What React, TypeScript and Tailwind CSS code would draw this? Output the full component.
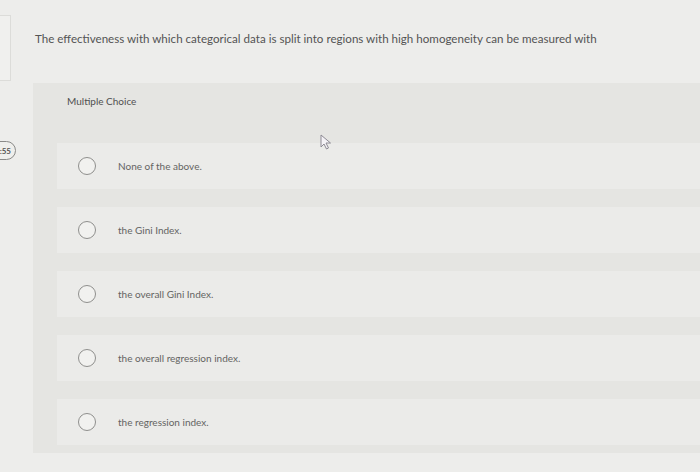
import React from 'react';

const options = [
  'None of the above.',
  'the Gini Index.',
  'the overall Gini Index.',
  'the overall regression index.',
  'the regression index.',
];

// Plain radio circle, unselected
const Radio: React.FC = () => (
  <span className="block h-[18px] w-[18px] shrink-0 rounded-full border-[1.5px] border-[#8f8f8d] bg-[#f1f1ef]" />
);

const Cursor: React.FC = () => (
  <svg width="12" height="16" viewBox="0 0 12 16" className="absolute left-[320px] top-[134px]">
    <path d="M1 1 L1 13 L4 10 L6.5 15 L8.5 14 L6 9 L10.5 9 Z" fill="#f4f2f6" stroke="#8d8a94" strokeWidth="1" strokeLinejoin="round" />
  </svg>
);

const App: React.FC = () => {
  return (
    <div className="relative h-[472px] w-[700px] overflow-hidden bg-[#ededeb] font-['Lato','Open_Sans',sans-serif]">
      {/* question header */}
      <div className="flex pt-[15px]">
        <div className="h-[66px] w-[11px] shrink-0 border-y border-r border-[#dcdcd9] bg-[#f0f0ee]" />
        <p className="ml-[24px] pt-[17px] text-[11.6px] leading-[14px] text-[#545454]">
          The effectiveness with which categorical data is split into regions with high homogeneity can be measured with
        </p>
      </div>

      {/* answer panel */}
      <div className="ml-[33px] mt-[2px] bg-[#e5e5e2] pb-[8px]">
        <div className="h-[60px] pl-[34px] pt-[11px] text-[10px] leading-[14px] text-[#505050]">Multiple Choice</div>
        <div className="ml-[24px] flex flex-col gap-[18px]">
          {options.map((opt) => (
            <div key={opt} className="flex h-[46px] items-center bg-[#ebebe9] pl-[21px]">
              <Radio />
              <span className="ml-[22px] text-[10px] leading-[14px] text-[#646462]">{opt}</span>
            </div>
          ))}
        </div>
      </div>

      {/* timer badge cut off at the left edge */}
      <div className="absolute left-[-12px] top-[141px] flex h-[19px] w-[28px] items-center justify-end rounded-full border border-[#8a8a88] bg-[#efefec] pr-[4px] text-[8px] font-bold text-[#555]">
        :55
      </div>

      <Cursor />
    </div>
  );
};

export default App;
